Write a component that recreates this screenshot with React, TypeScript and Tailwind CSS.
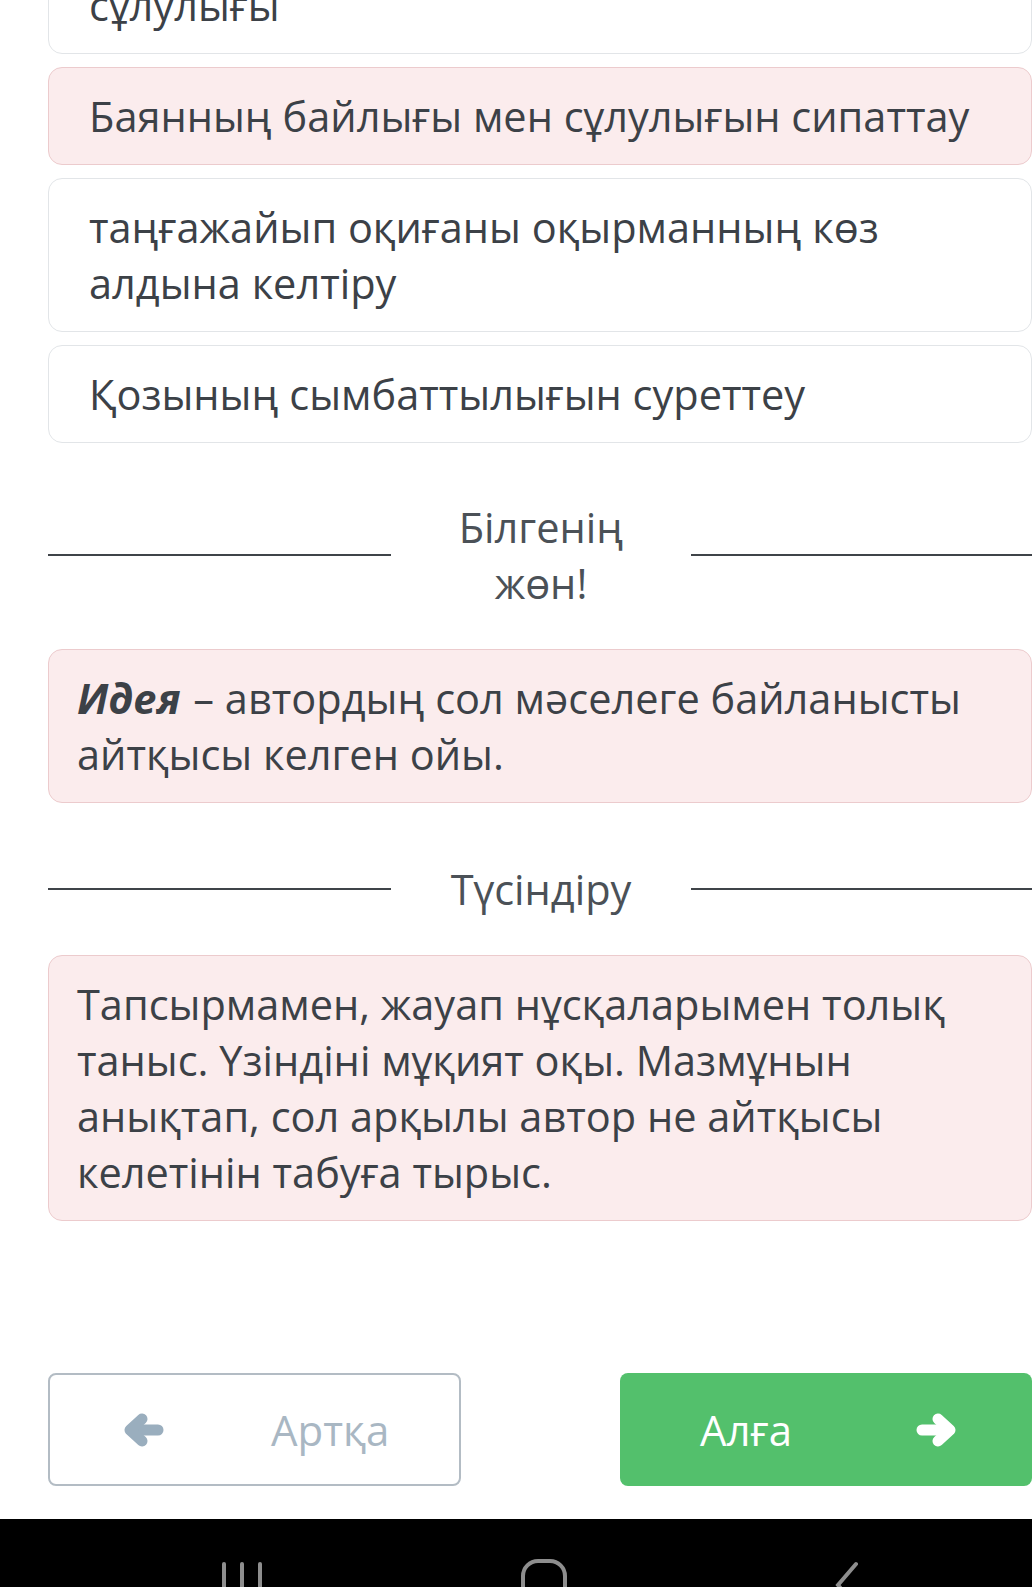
import React from 'react';

const font = { fontFamily: '"Open Sans", "Noto Sans", sans-serif' };

function Option({ children, active }: { children: React.ReactNode; active?: boolean }) {
  return (
    <div
      className={
        'rounded-[14px] border pl-[40px] pr-[42px] pt-[20px] pb-[20px] text-[41.5px] leading-[56px] text-[#3c4147] ' +
        (active ? 'bg-[#fbeced] border-[#eccbcd]' : 'bg-white border-[#e2e5e8]')
      }
    >
      {children}
    </div>
  );
}

function Divider({ children }: { children: React.ReactNode }) {
  return (
    <div className="flex items-center">
      <div className="w-[343px] h-[2px] bg-[#3f4449]" />
      <div className="w-[300px] px-[36px] text-center text-[41.5px] leading-[56px] text-[#4b5157]">
        {children}
      </div>
      <div className="flex-1 h-[2px] bg-[#3f4449]" />
    </div>
  );
}

function Arrow({ dir, color }: { dir: 'left' | 'right'; color: string }) {
  return (
    <svg width="42" height="34" viewBox="0 0 42 34" className={dir === 'right' ? 'scale-x-[-1]' : ''}>
      <g stroke={color} strokeWidth="11" strokeLinecap="round" strokeLinejoin="round" fill="none">
        <line x1="9" y1="17" x2="36" y2="17" />
        <polyline points="20,6 8,17 20,28" />
      </g>
    </svg>
  );
}

export default function App() {
  return (
    <div className="w-[1032px] h-[1587px] overflow-hidden bg-white flex flex-col" style={font}>
      <div className="pl-[48px] flex flex-col">
        <div className="mt-[-44px] flex flex-col gap-[13px]">
          <Option>сұлулығы</Option>
          <Option active>Баянның байлығы мен сұлулығын сипаттау</Option>
          <Option>таңғажайып оқиғаны оқырманның көз алдына келтіру</Option>
          <Option>Қозының сымбаттылығын суреттеу</Option>
        </div>

        <div className="mt-[56px]">
          <Divider>Білгенің жөн!</Divider>
        </div>

        <div className="mt-[38px] rounded-[14px] border border-[#eccbcd] bg-[#fbeced] pl-[28px] pr-[54px] pt-[20px] pb-[20px] text-[41.5px] leading-[56px] text-[#3c4147]">
          <b className="italic font-bold pr-[2px]">Идея</b> – автордың сол мәселеге байланысты айтқысы келген ойы.
        </div>

        <div className="mt-[58px]">
          <Divider>Түсіндіру</Divider>
        </div>

        <div className="mt-[38px] rounded-[14px] border border-[#eccbcd] bg-[#fbeced] pl-[28px] pr-[54px] pt-[20px] pb-[20px] text-[41.5px] leading-[56px] text-[#3c4147]">
          Тапсырмамен, жауап нұсқаларымен толық таныс. Үзіндіні мұқият оқы. Мазмұнын анықтап, сол арқылы автор не айтқысы келетінін табуға тырыс.
        </div>

        <div className="mt-[152px] flex justify-between">
          <button className="w-[413px] h-[113px] rounded-[8px] border-2 border-[#b3bcc4] bg-white flex items-center text-[42px] text-[#a9b7c3]">
            <span className="ml-[72px] flex">
              <Arrow dir="left" color="#9aaebe" />
            </span>
            <span className="ml-[107px]">Артқа</span>
          </button>
          <button className="w-[412px] h-[113px] rounded-[8px] bg-[#53c06c] flex items-center text-[42px] text-white">
            <span className="ml-[80px]">Алға</span>
            <span className="ml-[124px] flex">
              <Arrow dir="right" color="#ffffff" />
            </span>
          </button>
        </div>
      </div>

      <div className="mt-[33px] flex-1 bg-black relative overflow-hidden">
        <svg className="absolute left-0 top-0" width="1032" height="80" viewBox="0 0 1032 80">
          <g stroke="#8e8e8e" strokeWidth="4" fill="none" strokeLinecap="round">
            <line x1="224" y1="45" x2="224" y2="90" />
            <line x1="242" y1="45" x2="242" y2="90" />
            <line x1="260" y1="45" x2="260" y2="90" />
            <rect x="523" y="42" width="42" height="60" rx="15" />
            <polyline points="856,45 838,66 856,88" />
          </g>
        </svg>
      </div>
    </div>
  );
}
